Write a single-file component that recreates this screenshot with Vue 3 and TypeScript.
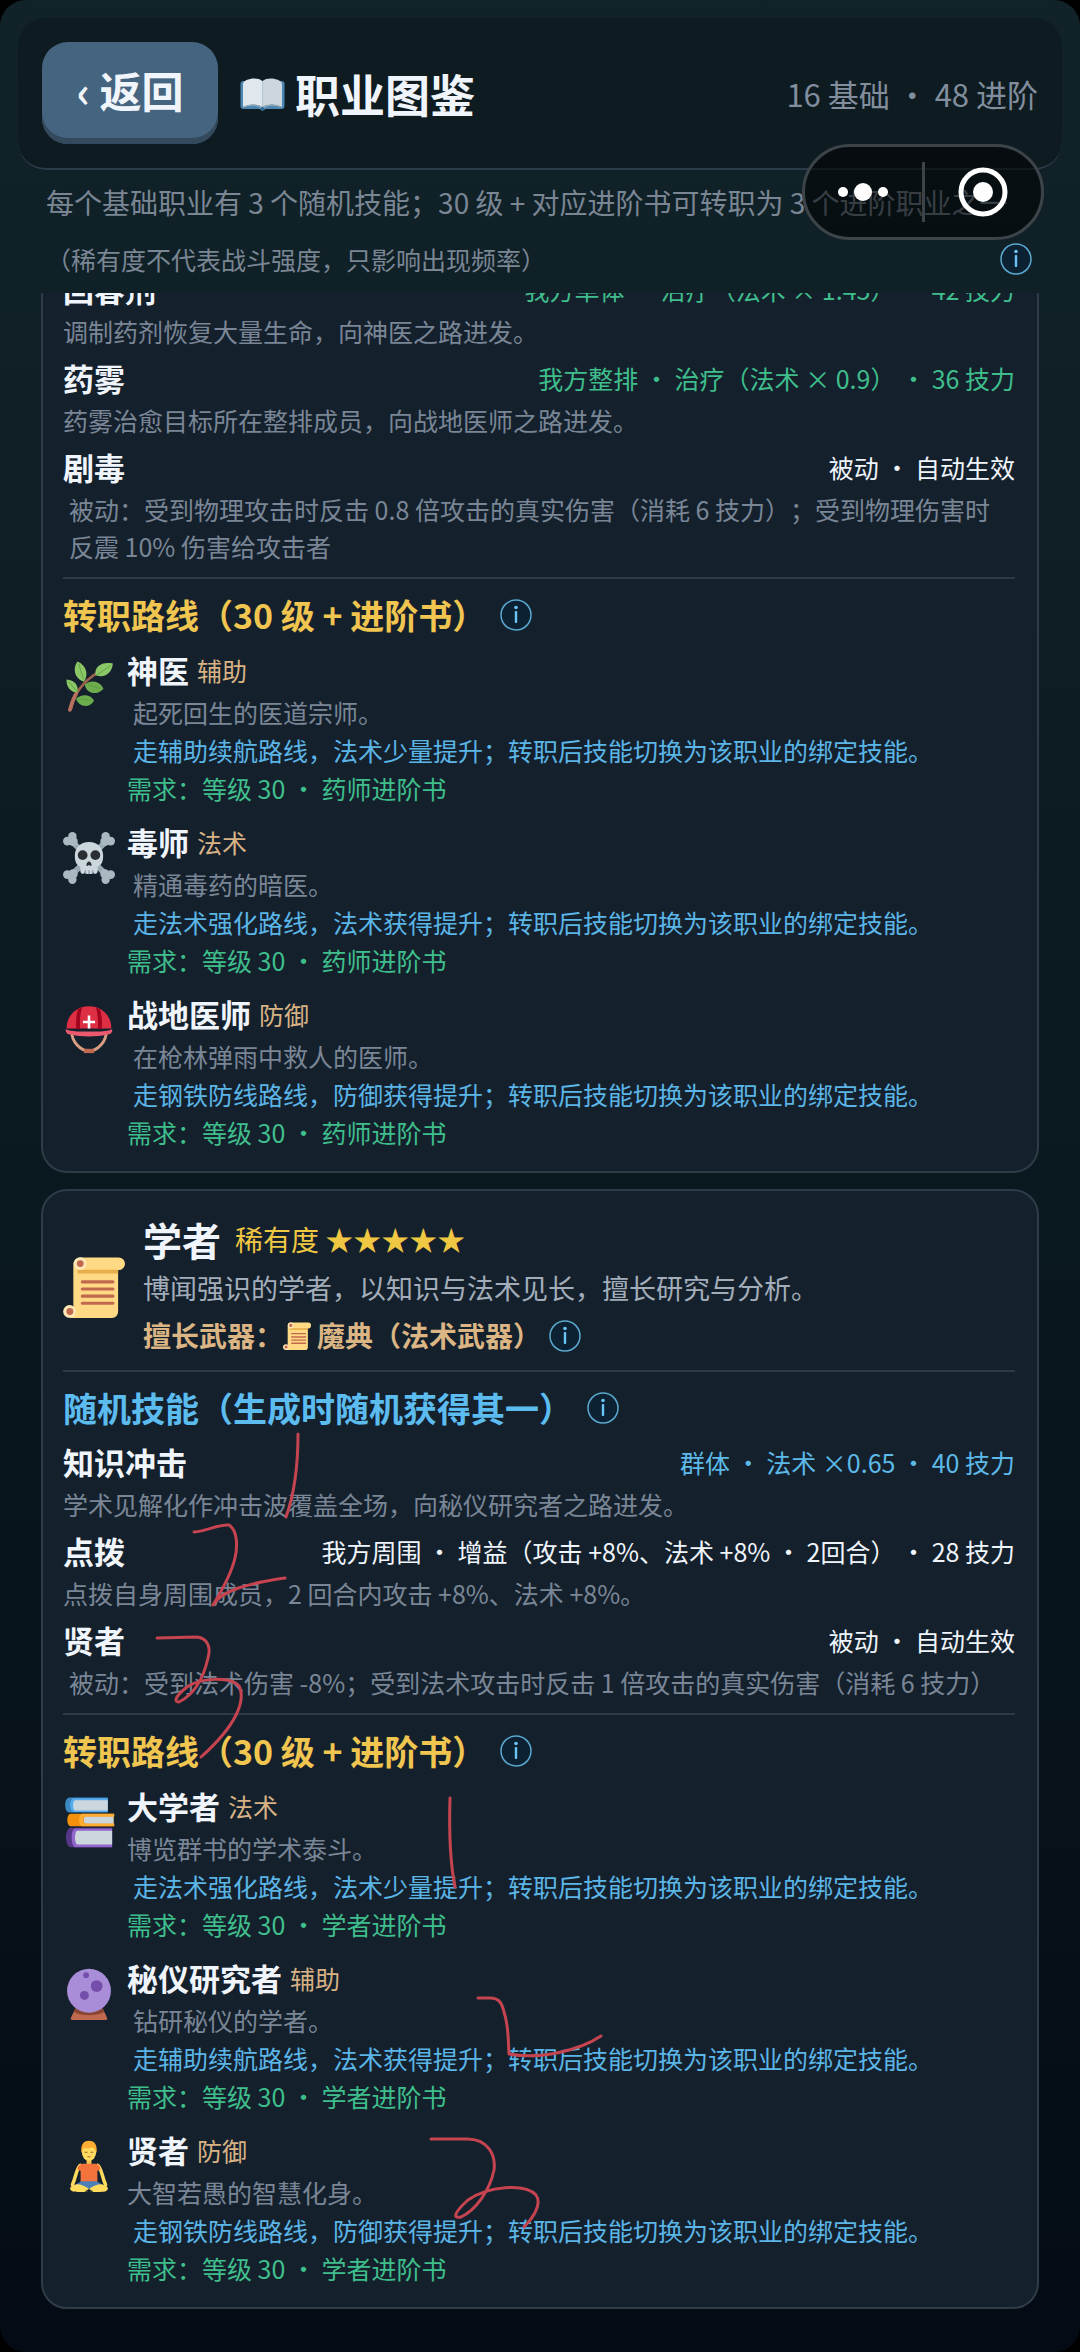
<script setup lang="ts">
import { defineComponent, h } from 'vue'

interface Skill {
  name: string
  meta: string
  tone: 'heal' | 'spell' | 'plain'
  desc: string
  inset?: boolean
}

interface Path {
  icon: string
  name: string
  tag: string
  desc: string
  inset?: boolean
  route: string
  need: string
}

interface Job {
  id: string
  scrolled: boolean
  name?: string
  rarity?: string
  intro?: string
  weapon?: string
  skills: Skill[]
  paths: Path[]
}

const InfoButton = defineComponent({
  props: { label: { type: String, required: true } },
  setup(props) {
    return () =>
      h('button', { class: 'info', type: 'button', 'aria-label': props.label }, [
        h('svg', { viewBox: '0 0 32 32', width: 32, height: 32 }, [
          h('circle', { cx: 16, cy: 16, r: 15, fill: '#0c2233', stroke: '#5aa9d0', 'stroke-width': 1.5 }),
          h('circle', { cx: 16, cy: 8.5, r: 1.8, fill: '#6cc4f5' }),
          h('rect', { x: 14.8, y: 12, width: 2.4, height: 12, rx: 0.8, fill: '#6cc4f5' }),
        ]),
      ])
  },
})

const jobs: Job[] = [
  {
    id: 'herbalist',
    scrolled: true,
    skills: [
      { name: '回春剂', meta: '我方单体 ・ 治疗（法术 × 1.45） ・ 42 技力', tone: 'heal', desc: '调制药剂恢复大量生命，向神医之路进发。' },
      { name: '药雾', meta: '我方整排 ・ 治疗（法术 × 0.9） ・ 36 技力', tone: 'heal', desc: '药雾治愈目标所在整排成员，向战地医师之路进发。' },
      { name: '剧毒', meta: '被动 ・ 自动生效', tone: 'plain', desc: '被动：受到物理攻击时反击 0.8 倍攻击的真实伤害（消耗 6 技力）；受到物理伤害时反震 10% 伤害给攻击者', inset: true },
    ],
    paths: [
      { icon: 'herb', name: '神医', tag: '辅助', desc: '起死回生的医道宗师。', inset: true, route: '走辅助续航路线，法术少量提升；转职后技能切换为该职业的绑定技能。', need: '需求：等级 30 ・ 药师进阶书' },
      { icon: 'skull', name: '毒师', tag: '法术', desc: '精通毒药的暗医。', inset: true, route: '走法术强化路线，法术获得提升；转职后技能切换为该职业的绑定技能。', need: '需求：等级 30 ・ 药师进阶书' },
      { icon: 'helmet', name: '战地医师', tag: '防御', desc: '在枪林弹雨中救人的医师。', inset: true, route: '走钢铁防线路线，防御获得提升；转职后技能切换为该职业的绑定技能。', need: '需求：等级 30 ・ 药师进阶书' },
    ],
  },
  {
    id: 'scholar',
    scrolled: false,
    name: '学者',
    rarity: '稀有度 ★★★★★',
    intro: '博闻强识的学者，以知识与法术见长，擅长研究与分析。',
    weapon: '魔典（法术武器）',
    skills: [
      { name: '知识冲击', meta: '群体 ・ 法术 ×0.65 ・ 40 技力', tone: 'spell', desc: '学术见解化作冲击波覆盖全场，向秘仪研究者之路进发。' },
      { name: '点拨', meta: '我方周围 ・ 增益（攻击 +8%、法术 +8% ・ 2回合） ・ 28 技力', tone: 'plain', desc: '点拨自身周围成员，2 回合内攻击 +8%、法术 +8%。' },
      { name: '贤者', meta: '被动 ・ 自动生效', tone: 'plain', desc: '被动：受到法术伤害 -8%；受到法术攻击时反击 1 倍攻击的真实伤害（消耗 6 技力）', inset: true },
    ],
    paths: [
      { icon: 'books', name: '大学者', tag: '法术', desc: '博览群书的学术泰斗。', route: '走法术强化路线，法术少量提升；转职后技能切换为该职业的绑定技能。', need: '需求：等级 30 ・ 学者进阶书' },
      { icon: 'orb', name: '秘仪研究者', tag: '辅助', desc: '钻研秘仪的学者。', inset: true, route: '走辅助续航路线，法术获得提升；转职后技能切换为该职业的绑定技能。', need: '需求：等级 30 ・ 学者进阶书' },
      { icon: 'lotus', name: '贤者', tag: '防御', desc: '大智若愚的智慧化身。', route: '走钢铁防线路线，防御获得提升；转职后技能切换为该职业的绑定技能。', need: '需求：等级 30 ・ 学者进阶书' },
    ],
  },
]
</script>

<template>
  <div class="page">
    <svg class="defs" aria-hidden="true">
      <symbol id="scroll" viewBox="0 0 36 36">
        <path d="M10 .8h22.3a3.7 3.7 0 0 1 0 7.4H32v24.200a3.600 3.600 0 0 1-3.600 3.600H4V30h2V4.800a4 4 0 0 1 4-4z" fill="#FFD983" />
        <path d="M8.500 8h23.500v2.200H8.500z" fill="#E8AE4C" />
        <circle cx="10" cy="4.400" r="3.700" fill="#FFE8B6" />
        <circle cx="10" cy="4.400" r="2" fill="#C1694F" />
        <circle cx="3.800" cy="32.200" r="3.700" fill="#FFE8B6" />
        <circle cx="4" cy="32.200" r="2" fill="#C1694F" />
        <path d="M11.200 15h17.800M11.200 19.200h17.800M11.200 23.300h17.800M11.200 27.400h17.800" stroke="#C1694F" stroke-width="1.800" stroke-linecap="round" />
      </symbol>
      <symbol id="book" viewBox="0 0 44 34">
        <path d="M3 4h38a3 3 0 0 1 3 3v22a3 3 0 0 1-3 3H25l-3 2-3-2H3a3 3 0 0 1-3-3V7a3 3 0 0 1 3-3z" fill="#4C87B4" />
        <path d="M2.500 7c0-5 14-8 19.500-3v26C16 26.500 8 27 2.500 30z" fill="#E1E8ED" />
        <path d="M41.500 7c0-5-14-8-19.500-3v26c6-3.500 14-3 19.500 0z" fill="#CCD6DD" />
        <path d="M3 30c6-2.500 14-3 19 1.500C27 27 35 27.500 41 30" stroke="#9AAAB4" stroke-width="1.200" fill="none" />
        <circle cx="22" cy="31.500" r="1.500" fill="#226699" />
      </symbol>
      <symbol id="herb" viewBox="0 0 36 36">
        <path d="M5.500 34C7 25 12 16 25 8" stroke="#A0604F" stroke-width="1.800" fill="none" />
        <path d="M4.800 34.500C6 30 7 27 9 23.500" stroke="#B9705F" stroke-width="2.600" stroke-linecap="round" fill="none" />
        <path d="M14.500 15C7 12.500 7 5 10 1c6 2.500 8 9 4.500 14z" fill="#8BC767" />
        <path d="M22.500 10.500C21.500 4.500 27 1 34.500 2.500c-.5 6.500-5.500 10.500-12 8z" fill="#8BC767" />
        <path d="M10 22.500C5 22.500 2 18 2.500 13.500c5.500.5 8.500 4 7.500 9z" fill="#8BC767" />
        <path d="M15 17c5-4 11-2 13 3-4.500 4.500-11.500 4-13-3z" fill="#6DAD4D" />
        <path d="M9 27c4-4 10-3 12.500 1-3 5.500-10 5-12.500-1z" fill="#6DAD4D" />
        <path d="M10.800 2.500l3.500 11M33 3.800l-9.500 6.500M3.800 15l6 7M17 17l9.500 3M10.500 27l9.500 1" stroke="#5C9E40" stroke-width=".6" />
      </symbol>
      <symbol id="skull" viewBox="0 0 36 36">
        <path d="M5.500 6l25 24M30.500 6l-25 24" stroke="#99AAB5" stroke-width="4" />
        <g fill="#AAB8C2">
          <circle cx="6.500" cy="2.900" r="2.900" /><circle cx="3" cy="6.300" r="3" /><circle cx="7" cy="6.500" r="3.200" />
          <circle cx="29.500" cy="2.900" r="2.900" /><circle cx="33" cy="6.300" r="3" /><circle cx="29" cy="6.500" r="3.200" />
          <circle cx="6.500" cy="33.100" r="2.900" /><circle cx="3" cy="29.500" r="3" /><circle cx="7" cy="29" r="3.200" />
          <circle cx="29.500" cy="33.100" r="2.900" /><circle cx="33" cy="29.500" r="3" /><circle cx="29" cy="29" r="3.200" />
        </g>
        <path d="M18 7c-6 0-9.800 4-9.800 9.500 0 4 1 6.500 3.800 7.500v3c0 1.500 1 2 2 2l1-1 1.500 1h3l1.500-1 1 1c1 0 2-.5 2-2v-3c2.800-1 3.800-3.500 3.800-7.500C27.800 11 24 7 18 7z" fill="#CCD6DD" />
        <circle cx="13.600" cy="16" r="3.400" fill="#292F33" />
        <circle cx="22.400" cy="16" r="3.400" fill="#292F33" />
        <path d="M18 20.500c-1 0-1.800 1.300-1.800 2.400 0 .9 1.200.6 1.800 0 .6.6 1.800.9 1.800 0 0-1.100-.8-2.400-1.800-2.400z" fill="#292F33" />
        <path d="M15.500 26.500v2.500M18 26.500v2.500M20.500 26.500v2.500" stroke="#8B98A3" stroke-width=".8" />
      </symbol>
      <symbol id="helmet" viewBox="0 0 36 36">
        <path d="M6 19c0 7 6 13.500 12 13.500S30 26 30 19" stroke="#D99E82" stroke-width="2" fill="none" />
        <path d="M14.500 31h7v3h-7z" fill="#C1694F" />
        <path d="M2.500 17C2.500 8 9 1.500 18 1.500S33.500 8 33.500 17z" fill="#DD2E44" />
        <path d="M10.500 3.500c-1.500 4-1.600 9-1.300 14l2.600-.4c-.3-5 0-10 1.400-14.600zM25.500 3.500c1.500 4 1.600 9 1.300 14l-2.600-.4c.3-5 0-10-1.400-14.600z" fill="#A0041E" />
        <path d="M2 17.500C7 19.500 12 19 18 19s11 .5 16-1.500c.5 2-1 3.500-2.500 3.500-4 1-9 1.500-13.500 1.500S8.500 22 4.500 21C3 21 1.500 19.500 2 17.500z" fill="#EA596E" />
        <path d="M18 8v9M13.800 12.500h8.400" stroke="#fff" stroke-width="1.800" />
      </symbol>
      <symbol id="books" viewBox="0 0 36 36">
        <path d="M4.500 1H31v10.500H4.500C2.500 11.500 1.500 9 1.500 6.300S2.500 1 4.500 1z" fill="#3B88C3" />
        <path d="M7.500 1.500H31v9.500H7.500C6 11 5 9 5 6.300s1-4.800 2.500-4.800z" fill="#55ACEE" />
        <path d="M8.500 3H31v7H8.500C7.500 10 7 8.500 7 6.500S7.500 3 8.500 3z" fill="#CCD6DD" />
        <path d="M5.500 22H34v13.500H5.500C3.500 35.500 2 32 2 28.500s1.500-6.500 3.500-6.500z" fill="#553788" />
        <path d="M8.500 22.500H34v13H8.500C7 35.500 6 32 6 28.500s1-6 2.500-6z" fill="#9266CC" />
        <path d="M10 24h24v9.500H10c-1 0-1.700-2-1.700-4.700S9 24 10 24z" fill="#CCD6DD" />
        <path d="M5.500 12.300H35v8.700H5.500C4 21 3 19 3 16.600s1-4.300 2.500-4.300z" fill="#F4900C" />
        <path d="M13.500 12.300H35.500v2.100H15c-1.600 0-1.600 4.600 0 4.600h20.500v2h-22c-3 0-3-8.700 0-8.700z" fill="#FFAC33" />
        <path d="M15.500 14.400H35v4.600H15.500c-1.500 0-1.500-4.600 0-4.600z" fill="#CCD6DD" />
      </symbol>
      <symbol id="orb" viewBox="0 0 36 36">
        <path d="M8.500 28h19l3 6.500c.5 1-.2 1.500-1 1.500h-23c-.8 0-1.500-.5-1-1.500z" fill="#C1694F" />
        <path d="M8.500 28h19l1 2.500c-6 3-15 3-21 0z" fill="#8A4633" />
        <circle cx="18" cy="15.800" r="15.200" fill="#AA8DD8" />
        <circle cx="23.300" cy="12.500" r="4.100" fill="#744EAA" />
        <circle cx="14.800" cy="19" r="3.100" fill="#744EAA" />
        <circle cx="16" cy="5" r="2" fill="#744EAA" />
      </symbol>
      <symbol id="lotus" viewBox="0 0 36 36">
        <path d="M12 17.500C9 20 9 26 6.500 31M24 17.500c3 2.500 3 8.500 5.500 13.500" stroke="#FFDC5D" stroke-width="2.400" stroke-linecap="round" fill="none" />
        <path d="M16.300 12h3.400v5h-3.400z" fill="#F2C54B" />
        <path d="M14 16.500h8c2.500 0 3.500 1.500 4 4l-2.200 1V29H12.200v-7.500l-2.200-1c.5-2.500 1.500-4 4-4z" fill="#F4723C" />
        <path d="M12.500 28.500h11L29 32l-8 3-3-1.500-3 1.500-8-3z" fill="#4B7FB5" />
        <path d="M7 31.500c3-1.500 6-1 11 2.500l3 1.700c-1 .5-12 .5-14 0-2.500-.7-3-3.200 0-4.200zM29 31.500c-3-1.500-6-1-11 2.500l-3 1.700c1 .5 12 .5 14 0 2.500-.7 3-3.200 0-4.200z" fill="#FFDC5D" />
        <ellipse cx="18" cy="8" rx="5" ry="6.500" fill="#FFDC5D" />
        <path d="M12.800 9C12 3.500 14 .5 18 .5S24 3.500 23.200 9c-.7-2-1.700-3.500-2.700-4-2 1-5 .8-6 .5-.8.800-1.200 2-1.700 3.500z" fill="#FFAC33" />
        <path d="M15 8.500h2M19 8.500h2" stroke="#A0603A" stroke-width=".7" />
        <path d="M16.300 11.300c1 1 2.400 1 3.400 0z" fill="#C1694F" />
      </symbol>
    </svg>

    <header class="topbar">
      <button class="back" type="button">‹ 返回</button>
      <h1 class="title">
        <svg class="title-icon" aria-hidden="true"><use href="#book" /></svg>
        职业图鉴
      </h1>
      <span class="counts">16 基础 ・ 48 进阶</span>
    </header>

    <div class="notes">
      <p class="note">每个基础职业有 3 个随机技能；30 级 + 对应进阶书可转职为 3 个进阶职业之一</p>
      <div class="note-row">
        <p class="note-small">（稀有度不代表战斗强度，只影响出现频率）</p>
        <InfoButton label="稀有度说明" />
      </div>
    </div>

    <main class="list">
      <article v-for="job in jobs" :key="job.id" class="card" :class="{ 'card-scrolled': job.scrolled }">
        <template v-if="job.name">
          <div class="hero">
            <svg class="hero-icon" aria-hidden="true"><use href="#scroll" /></svg>
            <div class="hero-text">
              <div class="hero-head">
                <h2 class="hero-name">{{ job.name }}</h2>
                <span class="rarity">{{ job.rarity }}</span>
              </div>
              <p class="hero-intro">{{ job.intro }}</p>
              <div class="weapon">
                <span>擅长武器：</span>
                <svg class="weapon-icon" aria-hidden="true"><use href="#scroll" /></svg>
                <span class="weapon-name">{{ job.weapon }}</span>
                <InfoButton label="武器说明" />
              </div>
            </div>
          </div>
          <hr class="rule" />
          <div class="heading heading-skill">
            <h3>随机技能（生成时随机获得其一）</h3>
            <InfoButton label="随机技能说明" />
          </div>
        </template>

        <ul class="skills">
          <li v-for="skill in job.skills" :key="skill.name">
            <div class="skill-head">
              <h4 class="name">{{ skill.name }}</h4>
              <span class="meta" :class="skill.tone">{{ skill.meta }}</span>
            </div>
            <p class="skill-desc" :class="{ inset: skill.inset }">{{ skill.desc }}</p>
          </li>
        </ul>

        <hr class="rule" />
        <div class="heading heading-path">
          <h3>转职路线（30 级 + 进阶书）</h3>
          <InfoButton label="转职路线说明" />
        </div>

        <ul class="paths">
          <li v-for="path in job.paths" :key="path.name" class="path">
            <svg class="path-icon" aria-hidden="true"><use :href="'#' + path.icon" /></svg>
            <div class="path-text">
              <div class="path-head">
                <h4 class="name">{{ path.name }}</h4>
                <span class="tag">{{ path.tag }}</span>
              </div>
              <p class="path-desc" :class="{ inset: path.inset }">{{ path.desc }}</p>
              <p class="route inset">{{ path.route }}</p>
              <p class="need">{{ path.need }}</p>
            </div>
          </li>
        </ul>

        <svg v-if="!job.scrolled" class="ink" viewBox="43 1191 994 1116" aria-hidden="true">
          <path d="M298 1434C298 1466 295 1492 286 1517" />
          <path d="M194 1532C208 1531 218 1524 229 1525C237 1530 238 1545 235 1558C231 1575 221 1592 213 1605C222 1590 250 1583 285 1578" />
          <path d="M157 1638L197 1637C208 1638 211 1648 208 1658C204 1676 195 1694 179 1702C172 1702 178 1694 187 1687C200 1678 230 1676 239 1686C246 1700 237 1725 201 1757" />
          <path d="M450 1798C449 1830 450 1862 455 1887" />
          <path d="M478 1998H490C500 1998 502 2004 504 2012C509 2027 508 2040 509 2054C540 2060 580 2050 601 2036" />
          <path d="M431 2139H467C488 2139 496 2155 494 2170C490 2190 476 2210 461 2217C450 2219 458 2209 468 2200C488 2186 525 2183 536 2195C543 2205 531 2220 524 2227" />
        </svg>
      </article>
    </main>

    <div class="capsule">
      <button class="capsule-btn" type="button" aria-label="更多">
        <svg width="50" height="50" viewBox="0 0 50 50" fill="#fff">
          <circle cx="5" cy="25" r="5" /><circle cx="25" cy="25" r="9" /><circle cx="45" cy="25" r="5" />
        </svg>
      </button>
      <span class="capsule-line"></span>
      <button class="capsule-btn" type="button" aria-label="关闭">
        <svg width="50" height="50" viewBox="0 0 50 50">
          <circle cx="25" cy="25" r="22" fill="none" stroke="#fff" stroke-width="5" />
          <circle cx="25" cy="25" r="10" fill="#fff" />
        </svg>
      </button>
    </div>
  </div>
</template>

<style>
html,
body {
  margin: 0;
  background: #000;
}
</style>

<style scoped>
.page {
  position: relative;
  box-sizing: border-box;
  min-height: 100vh;
  padding: 18px 0 42px;
  border-radius: 26px;
  background: linear-gradient(180deg, #112229 0%, #0e1e24 25%, #0a181f 50%, #07121a 75%, #040b14 100%);
  color: #f0f4fb;
  font-family: "Noto Sans CJK SC", "Noto Sans", sans-serif;
  text-spacing-trim: space-all;
}

.defs {
  position: absolute;
  width: 0;
  height: 0;
}

h1,
h2,
h3,
h4,
p,
ul {
  margin: 0;
  padding: 0;
  list-style: none;
}

button {
  padding: 0;
  border: 0;
  background: none;
  color: inherit;
  font: inherit;
}

.topbar {
  display: flex;
  align-items: center;
  margin: 0 18px;
  padding: 24px;
  border-bottom: 2px solid #2b3b49;
  border-radius: 28px;
  background: #0e1c22;
}

.back {
  box-sizing: border-box;
  width: 176px;
  height: 102px;
  padding-bottom: 6px;
  border-radius: 26px;
  background: #456480;
  box-shadow: inset 0 -6px 0 #34495c;
  font-size: 42px;
  font-weight: 700;
  line-height: 60px;
}

.title {
  display: flex;
  align-items: center;
  gap: 10px;
  margin-left: 22px;
  padding-top: 2px;
  font-size: 45px;
  line-height: 60px;
}

.title-icon {
  width: 45px;
  height: 34px;
}

.counts {
  margin-left: auto;
  padding-top: 2px;
  color: #828e9d;
  font-size: 31px;
  line-height: 44px;
}

.notes {
  padding: 12px 46px 18px 46px;
  color: #7a8694;
}

.note {
  font-size: 28px;
  line-height: 40px;
  white-space: nowrap;
}

.note-row {
  display: flex;
  align-items: center;
  justify-content: space-between;
  height: 32px;
  margin-top: 21px;
}

.note-small {
  font-size: 25px;
  line-height: 32px;
}

.notes .info {
  margin-right: 2px;
}

:deep(.info) {
  flex: none;
  width: 32px;
  height: 32px;
  padding: 0;
  border: 0;
  background: none;
}

:deep(.info) svg {
  display: block;
}

.list {
  display: flex;
  flex-direction: column;
  gap: 16px;
  overflow: hidden;
  padding: 0 41px;
}

.card {
  position: relative;
  padding: 24px 22px 20px 20px;
  border: 2px solid #2d3c48;
  border-radius: 26px;
  background: #14212d;
}

.card-scrolled {
  margin-top: -28px;
  padding-top: 0;
  border-top: 0;
  border-radius: 0 0 26px 26px;
}

.hero {
  display: flex;
  align-items: center;
  gap: 18px;
}

.hero-icon {
  flex: none;
  width: 62px;
  height: 62px;
}

.hero-head {
  display: flex;
  align-items: center;
  gap: 14px;
}

.hero-name {
  font-size: 39px;
  line-height: 48px;
}

.rarity {
  color: #f0c743;
  font-size: 28px;
  line-height: 48px;
}

.hero-intro {
  color: #a3adba;
  font-size: 27px;
  line-height: 50px;
}

.weapon {
  display: flex;
  align-items: center;
  color: #dcb584;
  font-size: 28px;
  font-weight: 700;
  line-height: 45px;
}

.weapon-icon {
  width: 28px;
  height: 28px;
}

.weapon-name {
  margin: 0 8px 0 6px;
}

.rule {
  height: 2px;
  margin: 12px 0;
  border: 0;
  background: #2c3b47;
}

.heading {
  display: flex;
  align-items: center;
  gap: 14px;
  height: 48px;
  margin-bottom: 8px;
}

.heading h3 {
  font-size: 34px;
  line-height: 48px;
}

.heading-skill {
  margin-bottom: 6px;
  color: #5cbcf0;
}

.heading-path {
  color: #f0c550;
}

.skills {
  display: flex;
  flex-direction: column;
  gap: 4px;
}

.skill-head {
  display: flex;
  align-items: center;
  justify-content: space-between;
  height: 48px;
}

.name {
  font-size: 31px;
  line-height: 46px;
}

.meta {
  font-size: 25px;
  line-height: 37px;
}

.heal {
  color: #3fbe8c;
}

.spell {
  color: #5cb9e8;
}

.skill-desc {
  color: #7a8696;
  font-size: 25px;
  line-height: 37px;
}

.inset {
  padding: 0 6px;
}

.paths {
  display: flex;
  flex-direction: column;
  gap: 12px;
}

.path {
  display: flex;
  gap: 12px;
  font-size: 25px;
  line-height: 38px;
}

.path-icon {
  flex: none;
  width: 52px;
  height: 52px;
  margin-top: 13px;
}

.path-head {
  display: flex;
  align-items: center;
  gap: 8px;
}

.tag {
  color: #d8b284;
}

.path-desc {
  color: #7a8696;
}

.route {
  color: #5bb5e6;
}

.need {
  color: #3fbe8c;
}

.ink {
  position: absolute;
  top: 0;
  left: 0;
  width: 994px;
  height: 1116px;
  pointer-events: none;
}

.ink path {
  fill: none;
  stroke: #c64450;
  stroke-width: 3;
  stroke-linecap: round;
  stroke-linejoin: round;
}

.capsule {
  position: absolute;
  top: 144px;
  right: 36px;
  display: flex;
  align-items: center;
  box-sizing: border-box;
  width: 242px;
  height: 96px;
  border: 3px solid #3c4449;
  border-radius: 48px;
  background: rgba(0, 0, 0, 0.54);
}

.capsule-btn {
  display: flex;
  flex: 1;
  justify-content: center;
}

.capsule-line {
  width: 3px;
  height: 60px;
  background: #3c4449;
}
</style>
